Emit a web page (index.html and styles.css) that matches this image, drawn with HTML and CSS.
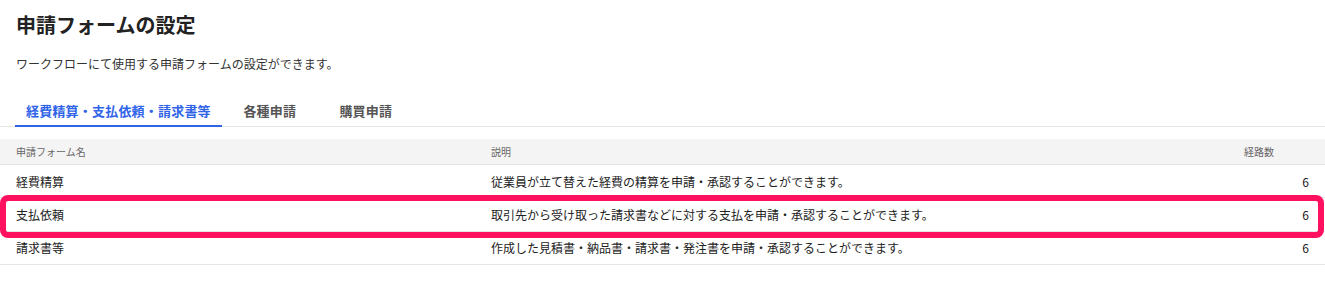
FILE: index.html
```html
<!DOCTYPE html>
<html lang="ja">
<head>
<meta charset="utf-8">
<title>申請フォームの設定</title>
<link rel="stylesheet" href="styles.css">
</head>
<body>
<div class="page">
  <h1 class="title">申請フォームの設定</h1>
  <p class="lead">ワークフローにて使用する申請フォームの設定ができます。</p>
  <div class="tabs">
    <div class="tab active">経費精算・支払依頼・請求書等</div>
    <div class="tab">各種申請</div>
    <div class="tab">購買申請</div>
  </div>
  <div class="table-wrap">
    <table class="forms">
      <colgroup>
        <col class="c-name">
        <col class="c-desc">
        <col class="c-count">
      </colgroup>
      <thead>
        <tr><th class="name">申請フォーム名</th><th>説明</th><th>経路数</th></tr>
      </thead>
      <tbody>
        <tr><td class="name">経費精算</td><td>従業員が立て替えた経費の精算を申請・承認することができます。</td><td class="num">6</td></tr>
        <tr><td class="name">支払依頼</td><td>取引先から受け取った請求書などに対する支払を申請・承認することができます。</td><td class="num">6</td></tr>
        <tr><td class="name">請求書等</td><td>作成した見積書・納品書・請求書・発注書を申請・承認することができます。</td><td class="num">6</td></tr>
      </tbody>
    </table>
    <div class="highlight"></div>
  </div>
</div>
</body>
</html>
```
FILE: styles.css
```css
html, body {
  margin: 0;
  padding: 0;
  background: #ffffff;
}
body {
  font-family: "Noto Sans CJK JP", "Noto Sans", sans-serif;
  color: #222222;
}
.page {
  padding-top: 11px;
}
.title {
  margin: 0 16px;
  font-size: 20px;
  line-height: 28px;
  font-weight: 700;
  color: #222222;
}
.lead {
  margin: 16px 16px 0;
  font-size: 12px;
  line-height: 18px;
  color: #333333;
}
.tabs {
  display: flex;
  margin-top: 21px;
  padding-left: 15px;
  box-shadow: inset 0 -1px 0 #e6e6e6;
}
.tab {
  min-width: 96px;
  box-sizing: border-box;
  padding: 8px 11px 5px;
  font-size: 13px;
  line-height: 18px;
  font-weight: 700;
  letter-spacing: 0.2px;
  color: #555555;
  text-align: center;
  border-bottom: 2px solid transparent;
}
.tab.active {
  color: #2f64e8;
  border-bottom-color: #2f64e8;
}
.table-wrap {
  position: relative;
  margin-top: 12px;
}
.forms {
  width: 100%;
  border-collapse: collapse;
  table-layout: fixed;
}
.c-name { width: 491px; }
.c-count { width: 81px; }
.forms th {
  height: 25px;
  padding: 0;
  background: #f5f4f5;
  border-bottom: 1px solid #e3e3e3;
  font-size: 10px;
  font-weight: 400;
  color: #666666;
  text-align: left;
  vertical-align: middle;
}
.forms td {
  height: 32.4px;
  padding: 0;
  border-bottom: 1px solid #e6e6e6;
  font-size: 12px;
  color: #222222;
  vertical-align: middle;
  white-space: nowrap;
}
.forms .name {
  padding-left: 16px;
}
.forms td.num {
  text-align: right;
  padding-right: 16px;
}
.highlight {
  position: absolute;
  left: 0;
  top: 56px;
  width: 1324px;
  height: 43px;
  box-sizing: border-box;
  border: 6px solid #ff1160;
  border-radius: 8px;
  pointer-events: none;
}
```
